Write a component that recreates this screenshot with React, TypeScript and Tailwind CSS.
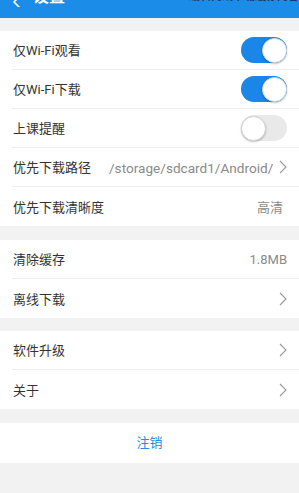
const FONT = "font-['Roboto','Noto_Sans_CJK_SC',sans-serif]";

function Chevron() {
  return (
    <svg width="8" height="14" viewBox="0 0 8 14" className="shrink-0">
      <path d="M1 1 L7 7 L1 13" fill="none" stroke="#9a9a9a" strokeWidth="1.1" />
    </svg>
  );
}

function Toggle({ on }: { on: boolean }) {
  return (
    <div
      className={`w-[46px] h-[26px] rounded-full flex items-center shrink-0 ${
        on ? "bg-[#1a86e8] justify-end" : "bg-[#e9e9e9] justify-start"
      }`}
    >
      <div
        className={`w-[25px] h-[25px] rounded-full bg-white ${
          on ? "border border-[#c9d6e2]" : "border border-[#d2d2d2]"
        } shadow-[0_1px_2px_rgba(0,0,0,0.25)]`}
      />
    </div>
  );
}

function Row({
  label,
  last,
  children,
}: {
  label: string;
  last?: boolean;
  children?: React.ReactNode;
}) {
  return (
    <div className="pl-3">
      <div
        className={`h-[39px] flex items-center pr-3 ${
          last ? "" : "border-b border-[#eeeeee]"
        }`}
      >
        <span className="text-[13px] text-[#333333] whitespace-nowrap shrink-0 pl-px pt-[2px]">{label}</span>
        <div className="flex-1 min-w-0 flex items-center justify-end">{children}</div>
      </div>
    </div>
  );
}

export default function App() {
  return (
    <div className={`w-[299px] h-[493px] bg-[#f2f2f2] overflow-hidden ${FONT}`}>
      <div className="h-[18px] bg-[#1c8ce9] overflow-hidden flex items-start">
        <svg width="10" height="12" viewBox="0 0 10 12" className="ml-[12px] mt-[-5px] shrink-0">
          <path d="M9 0 L2 7 L9 14" fill="none" stroke="#ffffff" strokeWidth="1.6" />
        </svg>
        <span className="ml-[11px] mt-[-12px] text-[16px] leading-[17px] font-bold text-white whitespace-nowrap">
          设置
        </span>
        <span className="ml-auto mr-0 mt-[-9px] text-[11px] leading-[11px] font-bold text-[#1d3560] whitespace-nowrap">
          编辑离线下载缓存内容
        </span>
      </div>

      <div className="h-[13px]" />

      <div className="bg-white">
        <Row label="仅Wi-Fi观看">
          <Toggle on />
        </Row>
        <Row label="仅Wi-Fi下载">
          <Toggle on />
        </Row>
        <Row label="上课提醒">
          <Toggle on={false} />
        </Row>
        <Row label="优先下载路径">
          <span className="ml-[18px] flex-1 min-w-0 whitespace-nowrap text-[13.6px] text-[#8a8a8a] pt-[2px]">
            /storage/sdcard1/Android/
          </span>
          <span className="ml-[2px]">
            <Chevron />
          </span>
        </Row>
        <Row label="优先下载清晰度" last>
          <span className="text-[13px] text-[#8a8a8a] mr-[4px] pt-[2px]">高清</span>
        </Row>
      </div>

      <div className="h-[14px]" />

      <div className="bg-white">
        <Row label="清除缓存">
          <span className="text-[13px] text-[#8a8a8a] pt-[2px]">1.8MB</span>
        </Row>
        <Row label="离线下载" last>
          <Chevron />
        </Row>
      </div>

      <div className="h-[13px]" />

      <div className="bg-white">
        <Row label="软件升级">
          <Chevron />
        </Row>
        <Row label="关于" last>
          <Chevron />
        </Row>
      </div>

      <div className="h-[14px]" />

      <div className="bg-white h-[40px] flex items-center justify-center">
        <span className="text-[13px] text-[#2a8ae0]">注销</span>
      </div>
    </div>
  );
}
